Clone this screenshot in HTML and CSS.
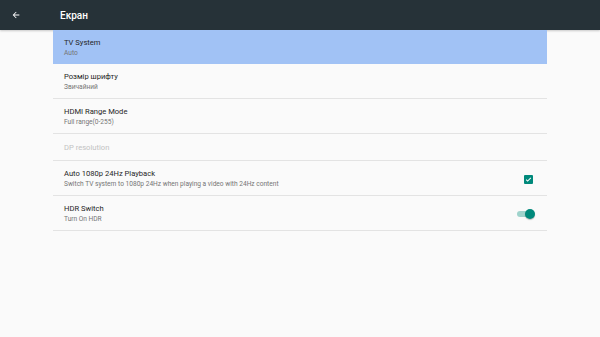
FILE: index.html
```html
<!DOCTYPE html>
<html lang="uk">
<head>
    <meta charset="UTF-8">
    <meta name="viewport" content="width=device-width, initial-scale=1.0">
    <title>Екран</title>
    <link rel="stylesheet" href="styles.css">
</head>
<body>
    <!-- Toolbar -->
    <div class="toolbar">
        <svg class="back" width="10" height="10" viewBox="0 0 24 24">
            <path d="M20 11H7.83l5.59-5.59L12 4l-8 8 8 8 1.41-1.41L7.83 13H20v-2z" fill="#ffffff"/>
        </svg>
        <span class="title">Екран</span>
    </div>

    <!-- Settings list -->
    <div class="list">
        <div class="row focused">
            <div class="text">
                <div class="row-title">TV System</div>
                <div class="row-sub">Auto</div>
            </div>
        </div>
        <div class="row">
            <div class="text">
                <div class="row-title">Розмір шрифту</div>
                <div class="row-sub">Звичайний</div>
            </div>
        </div>
        <div class="row">
            <div class="text">
                <div class="row-title">HDMI Range Mode</div>
                <div class="row-sub">Full range(0-255)</div>
            </div>
        </div>
        <div class="row single">
            <div class="text">
                <div class="row-title disabled">DP resolution</div>
            </div>
        </div>
        <div class="row">
            <div class="text">
                <div class="row-title">Auto 1080p 24Hz Playback</div>
                <div class="row-sub">Switch TV system to 1080p 24Hz when playing a video with 24Hz content</div>
            </div>
            <div class="checkbox">
                <svg width="7" height="7" viewBox="0 0 24 24">
                    <path d="M4 12.5l5 5L20 6.5" stroke="#ffffff" stroke-width="3.5" fill="none"/>
                </svg>
            </div>
        </div>
        <div class="row">
            <div class="text">
                <div class="row-title">HDR Switch</div>
                <div class="row-sub">Turn On HDR</div>
            </div>
            <div class="switch">
                <div class="track"></div>
                <div class="thumb"></div>
            </div>
        </div>
    </div>
</body>
</html>
```

FILE: styles.css
```css
/* Base */
body {
    font-family: Roboto, "Noto Sans", sans-serif;
    background-color: #fafafa;
    margin: 0;
    padding: 0;
}

/* Toolbar */
.toolbar {
    height: 30px;
    background-color: #263238;
    display: flex;
    align-items: center;
    box-shadow: 0 1px 2px rgba(0, 0, 0, 0.2);
}

.back {
    margin-left: 11px;
}

.title {
    margin-left: 39px;
    color: #ffffff;
    font-size: 10px;
    font-weight: 500;
}

/* List */
.list {
    margin-left: 53px;
    width: 494px;
}

.row {
    display: flex;
    align-items: center;
    padding: 8px 11px 6px 11px;
    border-bottom: 1px solid #e3e3e3;
    height: 20px;
}

.row.single {
    height: 10px;
    padding-top: 9px;
    padding-bottom: 7px;
}

.row.focused {
    background-color: #a1c2f5;
    border-bottom-color: #a1c2f5;
    height: 19px;
}

.text {
    flex: 1;
}

.row-title {
    font-size: 7.6px;
    line-height: 10px;
    color: #262626;
}

.row-title.disabled {
    color: #c2c2c2;
}

.row-sub {
    font-size: 6.6px;
    line-height: 10px;
    color: #757575;
}

/* Checkbox */
.checkbox {
    width: 9px;
    height: 9px;
    background-color: #00897b;
    border-radius: 1px;
    display: flex;
    align-items: center;
    justify-content: center;
    margin-right: 3px;
}

/* Switch */
.switch {
    position: relative;
    width: 18px;
    height: 10px;
    margin-right: 1px;
}

.track {
    position: absolute;
    left: 0;
    top: 2px;
    width: 14px;
    height: 6px;
    border-radius: 3px;
    background-color: #9fd3cc;
}

.thumb {
    position: absolute;
    right: 0;
    top: 0;
    width: 10px;
    height: 10px;
    border-radius: 50%;
    background-color: #00897b;
    box-shadow: 0 1px 1px rgba(0, 0, 0, 0.25);
}
```
